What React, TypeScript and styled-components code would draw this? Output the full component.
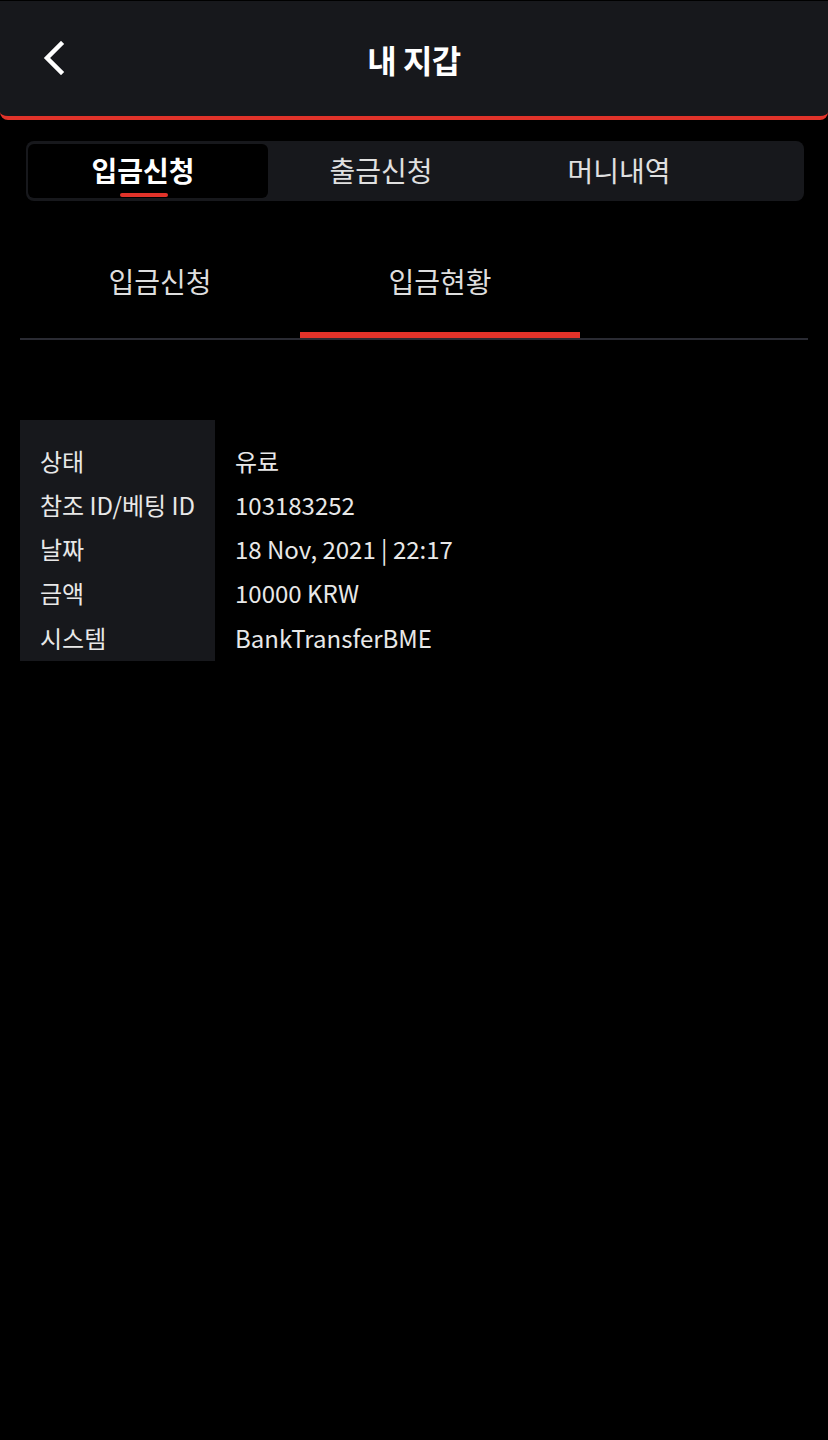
import React, { useState } from "react";
import styled, { createGlobalStyle } from "styled-components";

const GlobalStyle = createGlobalStyle`
  html, body {
    margin: 0;
    padding: 0;
    background: #000;
  }
  body {
    font-family: "Noto Sans CJK KR", "Noto Sans", sans-serif;
    color: #e6e6e6;
  }
`;

const Page = styled.div`
  width: 828px;
  min-height: 1440px;
  background: #000;
`;

const Header = styled.header`
  height: 115px;
  margin-top: 1px;
  background: #17181c;
  border-bottom: 4px solid #e2332a;
  border-radius: 0 0 8px 8px;
  display: flex;
  align-items: center;
  justify-content: center;
  position: relative;
`;

const BackButton = styled.button`
  position: absolute;
  left: 34px;
  top: 35px;
  width: 40px;
  height: 44px;
  padding: 0;
  border: none;
  background: none;
  display: flex;
  align-items: center;
  justify-content: center;
  cursor: pointer;
`;

const Title = styled.h1`
  margin: 0;
  font-size: 32px;
  font-weight: 700;
  color: #fff;
  letter-spacing: -0.5px;
`;

const MainTabs = styled.nav`
  margin: 21px 24px 0 26px;
  height: 60px;
  box-sizing: border-box;
  padding: 3px 2px;
  background: #17181c;
  border-radius: 8px;
  display: flex;
`;

const MainTab = styled.button<{ active?: boolean }>`
  width: 240px;
  height: 54px;
  margin-right: -2px;
  border: none;
  border-radius: 6px;
  background: ${(p) => (p.active ? "#000" : "transparent")};
  color: ${(p) => (p.active ? "#fff" : "#e0e0e0")};
  font-family: inherit;
  font-size: 28px;
  font-weight: ${(p) => (p.active ? 700 : 400)};
  padding: 0 10px 2px 0;
  position: relative;
  cursor: pointer;

  &::after {
    content: "";
    display: ${(p) => (p.active ? "block" : "none")};
    position: absolute;
    left: 92px;
    bottom: 1px;
    width: 48px;
    height: 4px;
    border-radius: 2px;
    background: #e2332a;
  }
`;

const SubTabs = styled.div`
  margin: 40px 20px 0;
  display: flex;
  border-bottom: 2px solid #2a2b33;
`;

const SubTab = styled.button<{ active?: boolean }>`
  width: 280px;
  height: 97px;
  border: none;
  background: none;
  color: #dedede;
  font-family: inherit;
  font-size: 28px;
  font-weight: 400;
  padding: 0 0 18px;
  position: relative;
  cursor: pointer;

  &::after {
    content: "";
    display: ${(p) => (p.active ? "block" : "none")};
    position: absolute;
    left: 0;
    right: 0;
    bottom: 0;
    height: 6px;
    background: #e2332a;
  }
`;

const InfoTable = styled.div`
  margin: 80px 20px 0;
  padding-bottom: 2px;
  display: grid;
  grid-template-columns: 195px 1fr;
  position: relative;

  &::before {
    content: "";
    position: absolute;
    left: 0;
    top: 0;
    bottom: 0;
    width: 195px;
    background: #17181c;
  }
`;

const Cell = styled.div<{ label?: boolean; first?: boolean }>`
  position: relative;
  height: 44.25px;
  box-sizing: border-box;
  display: flex;
  align-items: center;
  margin-top: ${(p) => (p.first ? "18px" : "0")};
  padding-left: 20px;
  font-size: 24px;
  color: #e8e8e8;
  white-space: nowrap;
`;

const rows: [string, string][] = [
  ["상태", "유료"],
  ["참조 ID/베팅 ID", "103183252"],
  ["날짜", "18 Nov, 2021 | 22:17"],
  ["금액", "10000 KRW"],
  ["시스템", "BankTransferBME"],
];

const ChevronLeft = () => (
  <svg width="24" height="34" viewBox="0 0 24 34">
    <path
      d="M19 3 L5 17 L19 31"
      fill="none"
      stroke="#fff"
      strokeWidth="4.5"
      strokeLinecap="square"
    />
  </svg>
);

export default function App() {
  const [mainTab, setMainTab] = useState(0);
  const [subTab, setSubTab] = useState(1);
  const mainTabs = ["입금신청", "출금신청", "머니내역"];
  const subTabs = ["입금신청", "입금현황"];

  return (
    <Page>
      <GlobalStyle />
      <Header>
        <BackButton aria-label="back">
          <ChevronLeft />
        </BackButton>
        <Title>내 지갑</Title>
      </Header>

      <MainTabs>
        {mainTabs.map((t, i) => (
          <MainTab key={t} active={mainTab === i} onClick={() => setMainTab(i)}>
            {t}
          </MainTab>
        ))}
      </MainTabs>

      <SubTabs>
        {subTabs.map((t, i) => (
          <SubTab key={t} active={subTab === i} onClick={() => setSubTab(i)}>
            {t}
          </SubTab>
        ))}
      </SubTabs>

      <InfoTable>
        {rows.map(([label, value], i) => (
          <React.Fragment key={label}>
            <Cell label first={i === 0}>
              {label}
            </Cell>
            <Cell first={i === 0}>{value}</Cell>
          </React.Fragment>
        ))}
      </InfoTable>
    </Page>
  );
}
